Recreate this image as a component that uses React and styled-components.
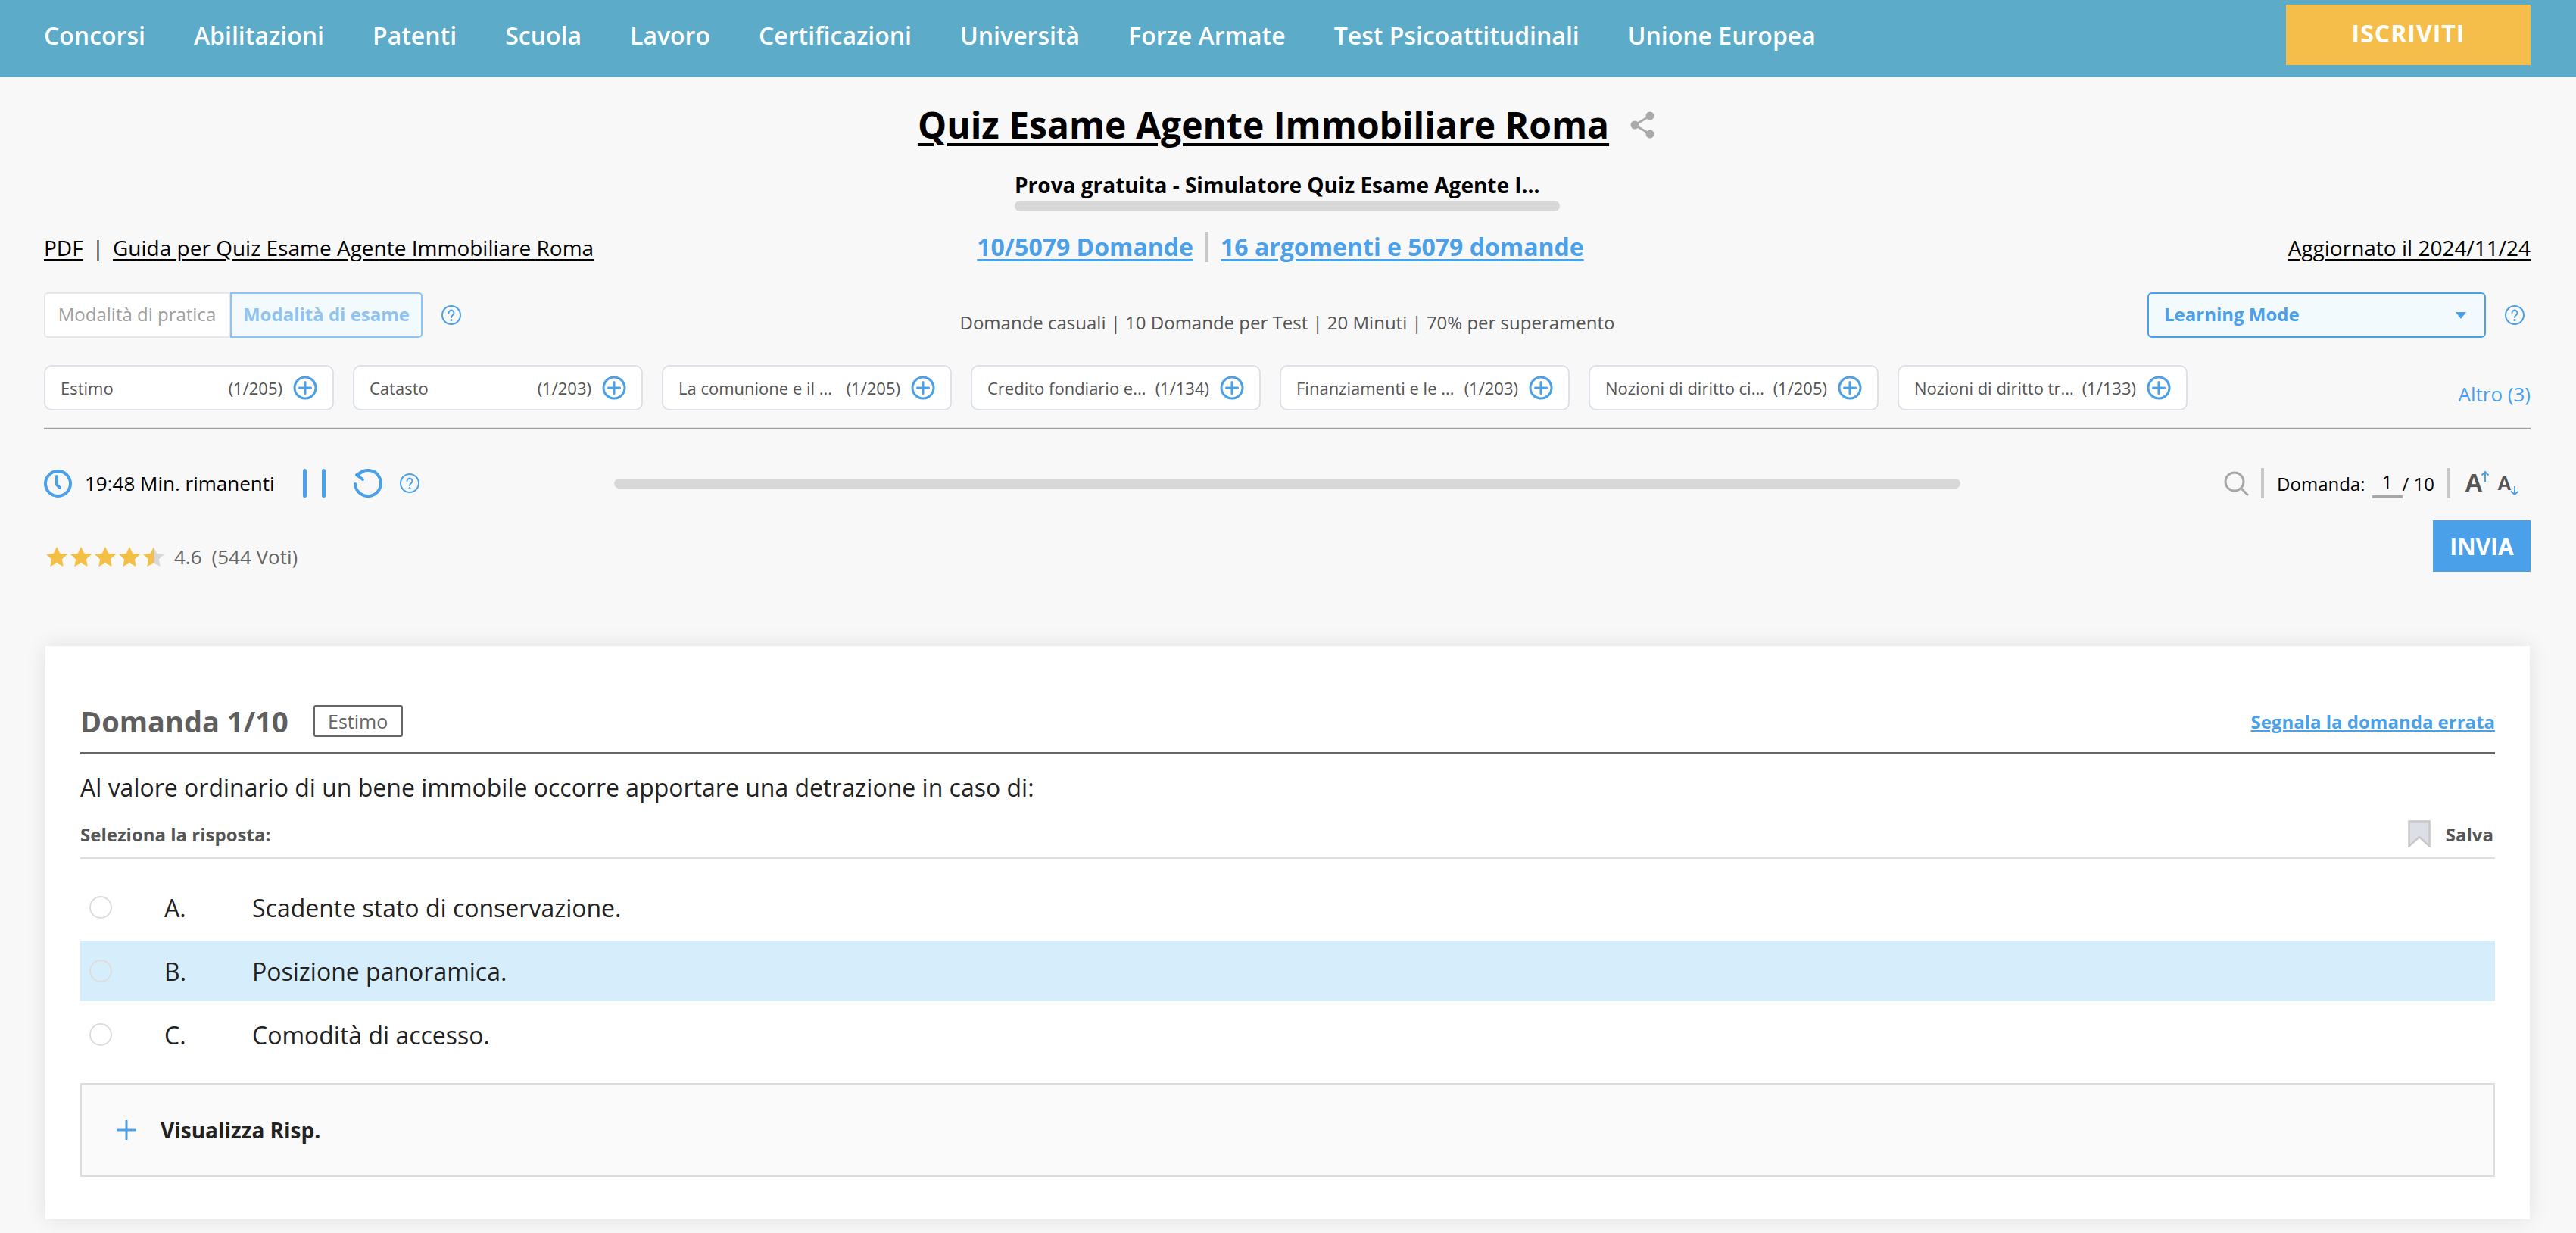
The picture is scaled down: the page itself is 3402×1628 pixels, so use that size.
import React from 'react'
import styled, { createGlobalStyle } from 'styled-components'

const blue = '#4ba0ea'

const Global = createGlobalStyle`
  html, body { margin:0; padding:0; background:#f8f8f8; }
  body { font-family:"Open Sans", "Noto Sans", sans-serif; color:#000; overflow:hidden; }
  * { box-sizing:border-box; }
`

const Page = styled.div`
  width:3402px;
  height:1628px;
  overflow:hidden;
`
const Spacer = styled.span`
  display:block;
  flex:none;
  width:${p => p.$w}px;
`
const Nav = styled.nav`
  height:102px;
  background:#5babc9;
  padding:6px 60px 16px 58px;
  display:flex;
  justify-content:space-between;
`
const NavLinks = styled.div`
  display:flex;
  gap:64px;
  align-items:center;
`
const NavLink = styled.a`
  font-size:32px;
  font-weight:600;
  color:#fff;
`
const Subscribe = styled.button`
  width:323px;
  height:80px;
  border:none;
  background:#f5be4b;
  color:#fff;
  font:700 32px "Open Sans", sans-serif;
  letter-spacing:1px;
  padding:0 0 6px;
`
const Main = styled.main`
  padding:0 60px 0 58px;
`
const TitleRow = styled.div`
  height:66px;
  margin-top:30px;
  padding-right:3px;
  display:flex;
  justify-content:center;
  align-items:center;
  gap:28px;
`
const Title = styled.h1`
  margin:0;
  font-size:48px;
  font-weight:700;
  line-height:66px;
  text-decoration:underline;
  text-decoration-thickness:4px;
  text-underline-offset:6px;
`
const Free = styled.div`
  width:720px;
  margin:26px 0 0 1282px;
`
const FreeText = styled.div`
  font-size:28px;
  font-weight:700;
  line-height:41px;
  white-space:nowrap;
`
const Track = styled.div`
  height:${p => p.$h}px;
  border-radius:${p => p.$h / 2}px;
  background:#d8d8d8;
`
const MetaRow = styled.div`
  display:grid;
  grid-template-columns:1fr auto 1fr;
  align-items:center;
  height:44px;
  margin-top:25px;
`
const BlackLink = styled.a`
  font-size:28px;
  color:#000;
  text-decoration:underline;
  text-underline-offset:4px;
`
const Left = styled.div`
  display:flex;
  gap:12px;
  font-size:28px;
`
const Counters = styled.div`
  display:flex;
  align-items:center;
  gap:16px;
  padding:0 18px 3px 0;
`
const BlueLink = styled.a`
  font-size:32px;
  font-weight:700;
  color:${blue};
  text-decoration:underline;
  text-underline-offset:4px;
`
const Bar = styled.span`
  width:${p => p.$w || 4}px;
  height:${p => p.$h || 40}px;
  background:#c8c8c8;
  display:block;
`
const Updated = styled(BlackLink)`
  justify-self:end;
`
const ModeRow = styled.div`
  display:grid;
  grid-template-columns:1fr auto 1fr;
  align-items:center;
  height:60px;
  margin-top:38px;
`
const Modes = styled.div`
  display:flex;
  align-items:center;
`
const Mode = styled.div`
  height:60px;
  width:${p => p.$w}px;
  padding-bottom:3px;
  display:flex;
  align-items:center;
  justify-content:center;
  font-size:24px;
  font-weight:${p => (p.$on ? 700 : 400)};
  color:${p => (p.$on ? '#90c4f0' : '#a0a0a0')};
  background:${p => (p.$on ? '#f3fafe' : '#fff')};
  border:2px solid ${p => (p.$on ? '#90c4f0' : '#e4e8ec')};
  border-radius:${p => (p.$on ? '0 5px 5px 0' : '5px 0 0 5px')};
`
const Info = styled.div`
  font-size:24px;
  color:#555;
  padding-top:18px;
`
const SelectWrap = styled.div`
  justify-self:end;
  display:flex;
  align-items:center;
  gap:25px;
  padding-right:8px;
`
const Select = styled.div`
  width:447px;
  height:60px;
  border:2px solid ${blue};
  border-radius:6px;
  background:#f3fafe;
  padding:0 24px 3px 20px;
  display:flex;
  align-items:center;
  justify-content:space-between;
  font-size:24px;
  font-weight:700;
  color:${blue};
`
const Caret = styled.span`
  width:0;
  height:0;
  margin-top:4px;
  border-left:7px solid transparent;
  border-right:7px solid transparent;
  border-top:9px solid ${blue};
`
const ChipRow = styled.div`
  display:flex;
  align-items:center;
  gap:25px;
  margin-top:36px;
  height:60px;
`
const Chip = styled.div`
  width:383px;
  height:60px;
  background:#fff;
  border:2px solid #dde2e8;
  border-radius:10px;
  padding:0 20px;
  display:flex;
  align-items:center;
  font-size:22px;
  color:#555;
`
const ChipName = styled.span`
  flex:1;
  white-space:nowrap;
`
const ChipCount = styled.span`
  margin-right:14px;
`
const More = styled.a`
  margin-left:auto;
  font-size:26px;
  color:${blue};
  padding-top:16px;
`
const Divider = styled.div`
  height:3px;
  background:#a0a0a0;
  border-top:1px solid #e6e6e6;
  margin-top:22px;
`
const TimerRow = styled.div`
  display:flex;
  align-items:center;
  height:44px;
  margin-top:49px;
`
const TimeLeft = styled.div`
  display:flex;
  align-items:center;
  width:753px;
  font-size:26px;
`
const TimeText = styled.span`
  margin-left:17px;
  margin-right:37px;
`
const Pause = styled.span`
  display:block;
  width:5px;
  height:38px;
  border-radius:3px;
  background:${blue};
  margin-right:${p => p.$mr}px;
`
const ProgressWrap = styled.div`
  width:1778px;
`
const Tools = styled.div`
  margin-left:auto;
  padding-right:12px;
  display:flex;
  align-items:center;
  font-size:24px;
`
const PageInput = styled.span`
  display:inline-block;
  width:40px;
  margin:2px 0 0 9px;
  text-align:center;
  border-bottom:4px solid #a8a8a8;
  line-height:32px;
  height:38px;
`
const FontBtn = styled.span`
  display:flex;
  align-items:flex-end;
  height:34px;
  width:${p => p.$w}px;
  font-size:${p => p.$size}px;
  line-height:34px;
  font-weight:700;
  color:#555;
  font-family:"Liberation Sans", sans-serif;
`
const FontArrow = styled.svg`
  flex:none;
  margin-left:-3px;
  align-self:${p => (p.$up ? 'flex-start' : 'flex-end')};
`
const RatingRow = styled.div`
  display:flex;
  justify-content:space-between;
  align-items:flex-start;
  margin-top:27px;
`
const Rating = styled.div`
  display:flex;
  align-items:center;
  padding:30px 0 0 2px;
  font-size:26px;
  color:#666;
`
const RatingNum = styled.span`
  margin-left:10px;
  margin-right:13px;
`
const Send = styled.button`
  width:129px;
  height:68px;
  border:none;
  background:${blue};
  color:#fff;
  font:700 30px "Open Sans", sans-serif;
`
const Card = styled.section`
  margin:98px 1px 0 2px;
  height:757px;
  background:#fff;
  box-shadow:0 0 26px rgba(0,0,0,.1);
  padding:78px 46px 0 46px;
`
const CardHead = styled.div`
  display:flex;
  align-items:center;
  height:65px;
  border-bottom:3px solid #666;
  padding-bottom:20px;
`
const CardTitle = styled.h2`
  margin:0;
  font-size:38px;
  font-weight:700;
  color:#5f5f5f;
`
const Tag = styled.span`
  margin-left:33px;
  height:42px;
  width:118px;
  border:2px solid #666;
  border-radius:3px;
  font-size:25px;
  color:#666;
  display:flex;
  align-items:center;
  justify-content:center;
`
const Report = styled.a`
  margin-left:auto;
  font-size:24px;
  font-weight:700;
  color:${blue};
  text-decoration:underline;
`
const Question = styled.p`
  margin:22px 0 0;
  font-size:32px;
  line-height:44px;
  color:#222;
`
const SelectHead = styled.div`
  display:flex;
  align-items:center;
  justify-content:space-between;
  height:72px;
  padding:21px 0 13px;
  border-bottom:2px solid #ddd;
  font-size:24px;
  font-weight:700;
  color:#555;
`
const Save = styled.span`
  display:flex;
  align-items:center;
  gap:20px;
  padding-right:2px;
`
const Options = styled.div`
  display:flex;
  flex-direction:column;
  gap:4px;
  margin-top:24px;
`
const Option = styled.div`
  height:80px;
  display:flex;
  align-items:center;
  padding-left:12px;
  font-size:32px;
  color:#222;
  background:${p => (p.$hi ? '#d6eefc' : 'transparent')};
`
const Radio = styled.span`
  width:30px;
  height:30px;
  border-radius:50%;
  border:2px solid #ddd;
  background:${p => (p.$hi ? 'transparent' : '#fff')};
`
const Letter = styled.span`
  width:116px;
  margin-left:69px;
`
const Reveal = styled.div`
  height:124px;
  margin-top:24px;
  border:2px solid #ddd;
  background:#fafafa;
  display:flex;
  align-items:center;
  padding-left:46px;
  gap:32px;
  font-size:28px;
  font-weight:700;
  color:#222;
`

const HelpIcon = () => (
  <svg width="26" height="26" viewBox="0 0 26 26" fill="none" stroke={blue} strokeWidth="2">
    <circle cx="13" cy="13" r="12" />
    <path d="M9.5 10a3.5 3.5 0 1 1 5.5 3c-1.3 .8-2 1.5-2 3" strokeLinecap="round" />
    <circle cx="13" cy="19.5" r=".6" />
  </svg>
)

const PlusCircle = () => (
  <svg width="32" height="32" viewBox="0 0 32 32" fill="none" stroke={blue} strokeWidth="3">
    <circle cx="16" cy="16" r="14" />
    <path d="M16 8.5v15M8.5 16h15" strokeLinecap="round" />
  </svg>
)

const Star = ({ half }) => (
  <svg width="32" height="28" viewBox="0 0 32 28">
    <defs>
      <linearGradient id="halfStar">
        <stop offset="50%" stopColor="#f5be45" />
        <stop offset="50%" stopColor="#d8d8d8" />
      </linearGradient>
    </defs>
    <path
      d="M15 1l4.2 8.8 9.8 1.2-7.2 6.6 1.9 9.4L15 22.4 6.3 27l1.9-9.4L1 11l9.8-1.2z"
      fill={half ? 'url(#halfStar)' : '#f5be45'}
    />
  </svg>
)

const navItems = ['Concorsi', 'Abilitazioni', 'Patenti', 'Scuola', 'Lavoro', 'Certificazioni', 'Università', 'Forze Armate', 'Test Psicoattitudinali', 'Unione Europea']

const chips = [
  ['Estimo', '(1/205)'],
  ['Catasto', '(1/203)'],
  ['La comunione e il ...', '(1/205)'],
  ['Credito fondiario e...', '(1/134)'],
  ['Finanziamenti e le ...', '(1/203)'],
  ['Nozioni di diritto ci...', '(1/205)'],
  ['Nozioni di diritto tr...', '(1/133)'],
]

const options = [
  ['A.', 'Scadente stato di conservazione.'],
  ['B.', 'Posizione panoramica.', true],
  ['C.', 'Comodità di accesso.'],
]

export default function App() {
  return (
    <Page>
      <Global />
      <Nav>
        <NavLinks>
          {navItems.map(n => <NavLink key={n}>{n}</NavLink>)}
        </NavLinks>
        <Subscribe>ISCRIVITI</Subscribe>
      </Nav>
      <Main>
        <TitleRow>
          <Title>Quiz Esame Agente Immobiliare Roma</Title>
          <svg width="32" height="36" viewBox="0 0 32 36" fill="none" stroke="#aaa" strokeWidth="3">
            <path d="M26 6L6 18l20 12" />
            <circle cx="26" cy="6" r="4" fill="#aaa" />
            <circle cx="6" cy="18" r="4" fill="#aaa" />
            <circle cx="26" cy="30" r="4" fill="#aaa" />
          </svg>
        </TitleRow>
        <Free>
          <FreeText>Prova gratuita - Simulatore Quiz Esame Agente I...</FreeText>
          <Track $h={14} />
        </Free>
        <MetaRow>
          <Left>
            <BlackLink>PDF</BlackLink>
            <span>|</span>
            <BlackLink>Guida per Quiz Esame Agente Immobiliare Roma</BlackLink>
          </Left>
          <Counters>
            <BlueLink>10/5079 Domande</BlueLink>
            <Bar />
            <BlueLink>16 argomenti e 5079 domande</BlueLink>
          </Counters>
          <Updated>Aggiornato il 2024/11/24</Updated>
        </MetaRow>
        <ModeRow>
          <Modes>
            <Mode $w={246}>Modalità di pratica</Mode>
            <Mode $w={254} $on>Modalità di esame</Mode>
            <Spacer $w={25} />
            <HelpIcon />
          </Modes>
          <Info>Domande casuali | 10 Domande per Test | 20 Minuti | 70% per superamento</Info>
          <SelectWrap>
            <Select>
              Learning Mode
              <Caret />
            </Select>
            <HelpIcon />
          </SelectWrap>
        </ModeRow>
        <ChipRow>
          {chips.map(([name, count]) => (
            <Chip key={name}>
              <ChipName>{name}</ChipName>
              <ChipCount>{count}</ChipCount>
              <PlusCircle />
            </Chip>
          ))}
          <More>Altro (3)</More>
        </ChipRow>
        <Divider />
        <TimerRow>
          <TimeLeft>
            <svg width="37" height="37" viewBox="0 0 37 37" fill="none" stroke={blue} strokeWidth="4">
              <circle cx="18.5" cy="18.5" r="16.5" />
              <path d="M17 9v11l4 4" strokeLinecap="round" />
            </svg>
            <TimeText>19:48 Min. rimanenti</TimeText>
            <Pause $mr={20} />
            <Pause $mr={36} />
            <svg width="40" height="38" viewBox="0 0 40 38" fill="none" stroke={blue} strokeWidth="4" strokeLinecap="round" strokeLinejoin="round">
              <path d="M7 8A17 17 0 1 1 3 20" />
              <path d="M14 3L5 8l8 6" />
            </svg>
            <Spacer $w={22} />
            <HelpIcon />
          </TimeLeft>
          <ProgressWrap>
            <Track $h={13} />
          </ProgressWrap>
          <Tools>
            <svg width="33" height="33" viewBox="0 0 33 33" fill="none" stroke="#a8a8a8" strokeWidth="3">
              <circle cx="14" cy="14" r="12" />
              <path d="M23 23l9 9" />
            </svg>
            <Spacer $w={16} />
            <Bar />
            <Spacer $w={17} />
            Domanda:
            <PageInput>1</PageInput>
            / 10
            <Spacer $w={17} />
            <Bar />
            <Spacer $w={19} />
            <FontBtn $size={33} $w={31}>
              A
              <FontArrow $up width="12" height="16" viewBox="0 0 12 16" fill="none" stroke={blue} strokeWidth="2">
                <path d="M6 15V2M1.5 6.5L6 2l4.5 4.5" />
              </FontArrow>
            </FontBtn>
            <Spacer $w={12} />
            <FontBtn $size={26} $w={32}>
              A
              <FontArrow width="14" height="14" viewBox="0 0 14 14" fill="none" stroke={blue} strokeWidth="2">
                <path d="M7 1v11M2 7.5L7 12l5-4.5" />
              </FontArrow>
            </FontBtn>
          </Tools>
        </TimerRow>
        <RatingRow>
          <Rating>
            <Star /><Star /><Star /><Star /><Star half />
            <RatingNum>4.6</RatingNum>
            (544 Voti)
          </Rating>
          <Send>INVIA</Send>
        </RatingRow>
        <Card>
          <CardHead>
            <CardTitle>Domanda 1/10</CardTitle>
            <Tag>Estimo</Tag>
            <Report>Segnala la domanda errata</Report>
          </CardHead>
          <Question>Al valore ordinario di un bene immobile occorre apportare una detrazione in caso di:</Question>
          <SelectHead>
            Seleziona la risposta:
            <Save>
              <svg width="30" height="36" viewBox="0 0 30 36">
                <path d="M1.5 1.5h27v33L15 22 1.5 34.5z" fill="#dce0e6" stroke="#c8c8c8" strokeWidth="2.5" />
              </svg>
              Salva
            </Save>
          </SelectHead>
          <Options>
            {options.map(([l, t, hi]) => (
              <Option key={l} $hi={hi}>
                <Radio $hi={hi} />
                <Letter>{l}</Letter>
                {t}
              </Option>
            ))}
          </Options>
          <Reveal>
            <svg width="26" height="26" viewBox="0 0 26 26" stroke={blue} strokeWidth="3" strokeLinecap="round">
              <path d="M13 1v24M1 13h24" />
            </svg>
            Visualizza Risp.
          </Reveal>
        </Card>
      </Main>
    </Page>
  )
}
